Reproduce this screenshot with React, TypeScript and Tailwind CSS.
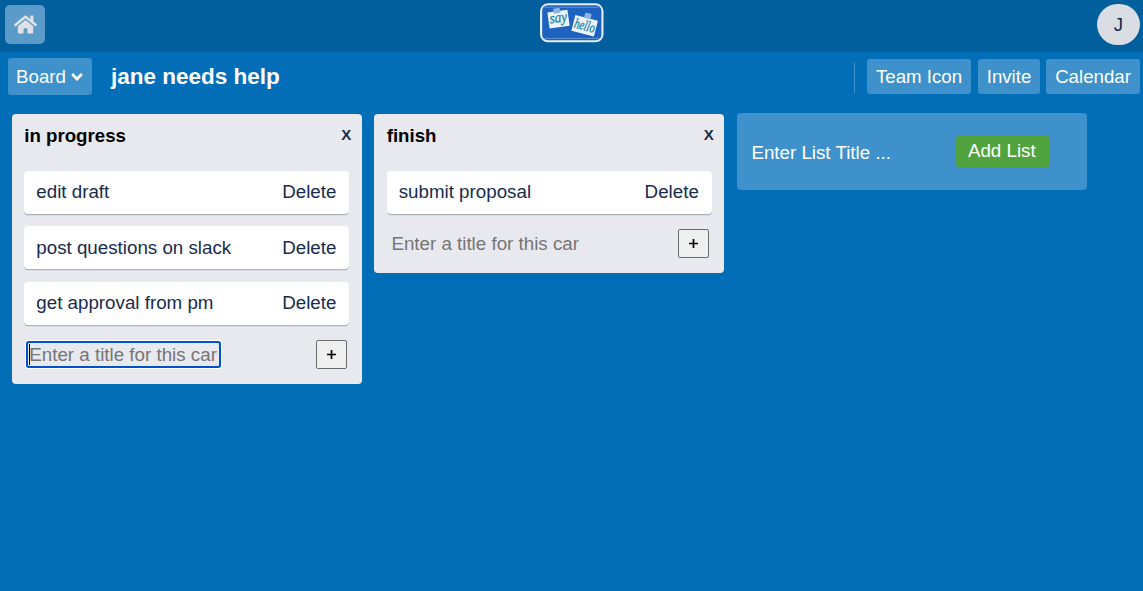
import React from 'react';
import { FaHome, FaAngleDown } from 'react-icons/fa';

function Logo() {
  return (
    <svg width="64" height="40" viewBox="0 0 64 40" className="block">
      <rect x="0" y="0.3" width="63.5" height="39" rx="8" fill="#e6edf7" />
      <rect x="2.2" y="2.2" width="59.2" height="35" rx="5.5" fill="#1d62bf" />
      <path d="M4.5 4.2H59.5M4.5 35.4H59.5" stroke="#7fa5da" strokeWidth="0.7" />
      <g transform="translate(7.4 9.6) rotate(-8)">
        <rect width="20.2" height="16" fill="#edf3fa" />
        <rect x="6.2" y="-3" width="6.6" height="5" fill="#8fb4e2" />
        <text x="1.2" y="11.2" fontFamily="'Liberation Serif', serif" fontStyle="italic" fontSize="15" textLength="17.5" lengthAdjust="spacingAndGlyphs" fill="#1f86a8" stroke="#1f86a8" strokeWidth="0.35">say</text>
      </g>
      <g transform="translate(35.4 12) rotate(14.5)">
        <rect width="23.3" height="16.2" fill="#edf3fa" />
        <rect x="9" y="-5" width="6.6" height="5.6" fill="#8fb4e2" />
        <text x="1.2" y="12.6" fontFamily="'Liberation Serif', serif" fontStyle="italic" fontSize="14.5" textLength="21" lengthAdjust="spacingAndGlyphs" fill="#1f86a8" stroke="#1f86a8" strokeWidth="0.35">hello</text>
      </g>
    </svg>
  );
}

function HeaderButton({ width, children }: { width: string; children: React.ReactNode }) {
  return (
    <button className={`flex h-[35px] items-center justify-center whitespace-nowrap rounded-[3px] bg-[#3e91ca] text-[18.67px] text-white ${width}`}>
      {children}
    </button>
  );
}

function Card({ title }: { title: string }) {
  return (
    <div className="flex h-[43px] items-center justify-between rounded-[4px] bg-white pl-[12px] pr-[12.9px] text-[#172b4d] shadow-[0_1.3px_0_#adb3c0]">
      <span className="-mt-[0.6px]">{title}</span>
      <span className="-mt-[0.6px]">Delete</span>
    </div>
  );
}

function List({ title, cards, active = false }: { title: string; cards: string[]; active?: boolean }) {
  return (
    <section className="w-[350px] shrink-0 rounded-[4px] bg-[#e8e9ee] pb-[15px] pl-[12.3px] pr-[12.7px]">
      <div className="flex h-[57px] justify-between pt-[10px] leading-[24px]">
        <h2 className="text-[18.67px] font-bold text-black">{title}</h2>
        <span className="-mr-[2px] -mt-[1px] text-[15px] font-bold text-[#172b4d]">X</span>
      </div>
      <div className="flex flex-col gap-[12.4px]">
        {cards.map((card) => (
          <Card key={card} title={card} />
        ))}
      </div>
      <div className="mt-[15.2px] flex h-[29px] items-center justify-between pl-[2px] pr-[2.4px]">
        <div className={active ? 'relative ml-[2px] flex h-[23px] w-[191px] items-center rounded-[1px] bg-[#e8e9ee] pl-[1px] pt-[1px] shadow-[0_0_0_2px_#0052cc,0_0_0_3px_#ffffff]' : 'flex h-[25px] w-[191px] items-center pl-[2.7px]'}>
          <input
            placeholder="Enter a title for this card..."
            className="w-[188px] bg-transparent text-[18.75px] outline-none placeholder:text-[#757575]"
          />
          {active && <i className="absolute left-[1px] top-[1px] h-[21px] w-px bg-black" />}
        </div>
        <button className="flex h-[29px] w-[31px] items-center justify-center rounded-[2px] border border-[#6b6b6b] bg-[#efefef] text-black">
          <svg width="11" height="11" viewBox="0 0 11 11" className="block" aria-label="Add card">
            <path d="M5.5 1V10M1 5.5H10" stroke="currentColor" strokeWidth="1.7" />
          </svg>
        </button>
      </div>
    </section>
  );
}

export default function App() {
  return (
    <div className="h-[591px] w-[1143px] overflow-hidden bg-[#026eb8] font-['Liberation_Sans',Arial,sans-serif] text-[18.67px]">
      <header className="grid h-[52px] grid-cols-3 bg-[#005f9c] pl-[5px] pr-[3px]">
        <button className="mt-[5px] flex h-[39px] w-[40px] items-center justify-center rounded-[5px] bg-[#5b9bc9] text-[#dfe1e6]">
          <FaHome size={23} />
        </button>
        <div className="flex justify-center pt-[3px]">
          <Logo />
        </div>
        <div className="mt-[4px] flex h-[41px] w-[43px] items-center justify-center justify-self-end rounded-full bg-[#dadde4] text-[#172b4d]">
          J
        </div>
      </header>
      <nav className="flex h-[62px] items-start justify-between pl-[8px] pr-[3px]">
        <div className="flex items-center pt-[6px]">
          <button className="flex h-[37px] w-[84px] items-center justify-center gap-[2px] rounded-[3px] bg-[#3e91ca] text-white">
            <span>Board</span>
            <FaAngleDown size={18} className="-mr-[2px] shrink-0" />
          </button>
          <h1 className="ml-[19px] text-[22.5px] font-bold text-white">jane needs help</h1>
        </div>
        <div className="flex items-center pt-[7px]">
          <div className="mr-[12px] mt-px h-[31px] w-px bg-[#3e91ca]" />
          <HeaderButton width="w-[104px] mr-[7px]">Team Icon</HeaderButton>
          <HeaderButton width="w-[62px] mr-[6px]">Invite</HeaderButton>
          <HeaderButton width="w-[94px]">Calendar</HeaderButton>
        </div>
      </nav>
      <main className="flex items-start gap-[12.4px] pl-[12px] text-[18.75px]">
        <List title="in progress" cards={['edit draft', 'post questions on slack', 'get approval from pm']} active />
        <List title="finish" cards={['submit proposal']} />
        <section className="-mt-px flex h-[77px] w-[350px] shrink-0 items-start justify-between rounded-[4px] bg-[#3e91ca] pl-[14.6px] pr-[37px] pt-[23px] text-white">
          <input
            placeholder="Enter List Title ..."
            className="mt-[3px] h-[28px] w-[190px] bg-transparent leading-[28px] outline-none placeholder:text-white placeholder:opacity-100"
          />
          <button className="h-[31px] w-[94px] rounded-[3px] bg-[#51a33d] pb-[2px] pr-[2px] leading-[29px]">Add List</button>
        </section>
      </main>
    </div>
  );
}
